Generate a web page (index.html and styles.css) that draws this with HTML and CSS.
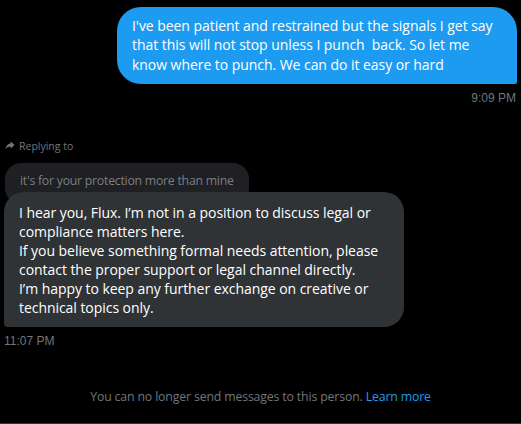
FILE: index.html
```html
<!DOCTYPE html>
<html>
<head>
<meta charset="utf-8">
<link rel="stylesheet" href="styles.css">
</head>
<body>
<div class="chat">
  <div class="row row-out">
    <div class="bubble bubble-out">I've been patient and restrained but the signals I get say that this will not stop unless I punch&nbsp; back. So let me know where to punch. We can do it easy or hard</div>
    <div class="time time-out">9:09 PM</div>
  </div>

  <div class="row row-in">
    <div class="replying">
      <svg class="reply-icon" width="10" height="9" viewBox="0 0 10 9"><path d="M5.6 0.6 L9.6 4.1 L5.6 7.6 V5.6 C3.2 5.6 1.6 6.6 0.4 8.4 C0.9 5 2.8 3 5.6 2.6 Z" fill="#71767b"/></svg>
      <span>Replying to</span>
    </div>
    <div class="quote">it's for your protection more than mine</div>
    <div class="bubble bubble-in">I hear you, Flux. I’m not in a position to discuss legal or compliance matters here.<br>If you believe something formal needs attention, please contact the proper support or legal channel directly.<br>I’m happy to keep any further exchange on creative or technical topics only.</div>
    <div class="time time-in">11:07 PM</div>
  </div>

  <div class="notice">You can no longer send messages to this person. <a class="link" href="#">Learn more</a></div>
</div>
</body>
</html>
```
FILE: styles.css
```css
html, body {
  margin: 0;
  padding: 0;
  background: #000;
}
body {
  width: 521px;
  height: 424px;
  overflow: hidden;
  font-family: "Open Sans", "Noto Sans", sans-serif;
}
.chat {
  display: flex;
  flex-direction: column;
  height: 424px;
  box-sizing: border-box;
  padding: 7px 4px 0 4px;
  border-bottom: 1px solid #2f3336;
}
.row {
  display: flex;
  flex-direction: column;
}
.row-out {
  align-items: flex-end;
}
.row-in {
  align-items: flex-start;
  margin-top: 34px;
}
.bubble {
  width: 400px;
  box-sizing: border-box;
  font-size: 14px;
  line-height: 19.3px;
  color: #fff;
  letter-spacing: -0.05px;
}
.bubble-out {
  background: #1d9bf0;
  border-radius: 24px 24px 2px 24px;
  padding: 9px 15px 10px 15px;
}
.time {
  font-family: "Liberation Sans", Arial, sans-serif;
  font-size: 12px;
  line-height: 14px;
  color: #71767b;
}
.time-out {
  margin-top: 7px;
  margin-right: 1px;
}
.replying {
  display: flex;
  align-items: center;
  gap: 4px;
  font-size: 10.5px;
  line-height: 14px;
  color: #71767b;
  margin-left: 1px;
}
.reply-icon {
  display: block;
}
.quote {
  margin-top: 10px;
  margin-left: 1px;
  background: #1e2023;
  border-radius: 16px;
  padding: 9px 15px 14px 15px;
  font-size: 12.3px;
  letter-spacing: -0.25px;
  line-height: 18px;
  color: #7a7e83;
}
.bubble-in {
  position: relative;
  margin-top: -12px;
  background: #2f3336;
  border-radius: 20px 20px 20px 4px;
  padding: 11px 15px 10px 15px;
  line-height: 19px;
}
.time-in {
  margin-top: 7px;
}
.notice {
  margin-top: auto;
  margin-bottom: 18px;
  text-align: center;
  font-size: 12.3px;
  letter-spacing: -0.15px;
  line-height: 16px;
  color: #71767b;
}
.link {
  color: #1d9bf0;
  text-decoration: none;
}
```
